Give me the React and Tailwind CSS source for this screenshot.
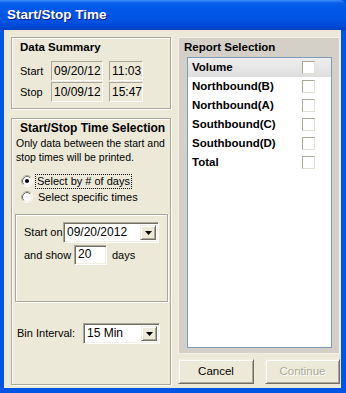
import React from 'react'

const font = "font-[family-name:'Liberation_Sans',Arial,sans-serif]"
const etched = 'border border-[#aca899] shadow-[1px_1px_0_#fff,inset_1px_1px_0_#fff]'
const sunken =
  'border border-t-[#aca899] border-l-[#aca899] border-b-white border-r-white shadow-[inset_1px_1px_0_#716f64,inset_-1px_-1px_0_#f1efe2]'
const raised =
  'border border-t-[#f1efe2] border-l-[#f1efe2] border-b-[#716f64] border-r-[#716f64] shadow-[inset_1px_1px_0_#fff,inset_-1px_-1px_0_#aca899]'

function Radio({ checked }) {
  return (
    <svg width="12" height="12" viewBox="0 0 12 12" className="shrink-0">
      <circle cx="6" cy="6" r="5.5" fill="none" stroke="#fff" />
      <path d="M2.11 9.89A5.5 5.5 0 0 1 9.89 2.11" fill="none" stroke="#aca899" />
      <circle cx="6" cy="6" r="4.5" fill="#fff" stroke="#f1efe2" />
      <path d="M2.82 9.18A4.5 4.5 0 0 1 9.18 2.82" fill="none" stroke="#716f64" />
      {checked && <circle cx="6" cy="6" r="2" fill="#000" />}
    </svg>
  )
}

function Combo({ value, className }) {
  return (
    <div className={`${sunken} bg-white flex items-stretch p-[2px] shrink-0 ${className}`}>
      <span className="flex-1 pl-[1px] text-[12px] leading-[15px] text-black whitespace-nowrap">{value}</span>
      <div className={`${raised} w-[16px] bg-[#ece9d8] flex items-center justify-center`}>
        <svg width="7" height="4" viewBox="0 0 7 4">
          <path d="M0 0h7L3.5 4z" fill="#000" />
        </svg>
      </div>
    </div>
  )
}

function StaticBox({ value, className }) {
  return (
    <div className={`h-[20px] shrink-0 border border-t-[#aca899] border-l-[#aca899] border-b-white border-r-white pl-[2px] text-[12px] leading-[18px] ${className}`}>
      {value}
    </div>
  )
}

const rows = ['Northbound(B)', 'Northbound(A)', 'Southbound(C)', 'Southbound(D)', 'Total']

function Check() {
  return <div className="w-[13px] h-[13px] shrink-0 bg-white border border-t-[#aca899] border-l-[#aca899] border-b-[#e2dfd4] border-r-[#e2dfd4]" />
}

export default function App() {
  return (
    <div className={`w-[346px] h-[393px] flex flex-col bg-[#0055e5] ${font} text-black whitespace-nowrap`}>
      {/* title bar */}
      <div className="h-[30px] shrink-0 flex items-center pl-[7px] rounded-tr-[6px] bg-[linear-gradient(to_bottom,#3d8df8_0px,#0b5fe9_3px,#0057e8_9px,#0054e3_20px,#0049d3_27px,#003fbd_30px)]">
        <span className="text-white font-bold text-[13.5px] [text-shadow:1px_1px_0_#0a1883]">Start/Stop Time</span>
      </div>

      {/* client */}
      <div className="flex-1 ml-[4px] mr-[5px] mb-[5px] bg-[#ece9d8] flex gap-[7px] pl-[7px] pt-[7px] pb-[3px]">
        {/* left column */}
        <div className="w-[160px] flex flex-col gap-[9px]">
          <div className={`${etched} h-[72px] flex flex-col pl-[8px]`}>
            <div className="mt-[2px] font-bold text-[11.5px] leading-[14px]">Data Summary</div>
            <div className="mt-[7px] flex flex-col gap-[1px] text-[11px]">
              <div className="flex items-center">
                <span className="w-[31px]">Start</span>
                <StaticBox value="09/20/12" className="w-[52px]" />
                <StaticBox value="11:03" className="w-[34px] ml-[6px]" />
              </div>
              <div className="flex items-center">
                <span className="w-[31px]">Stop</span>
                <StaticBox value="10/09/12" className="w-[52px]" />
                <StaticBox value="15:47" className="w-[34px] ml-[6px]" />
              </div>
            </div>
          </div>

          <div className={`${etched} flex-1 flex flex-col`}>
            <div className="mt-[2px] pl-[8px] font-bold text-[12px] leading-[14px]">Start/Stop Time Selection</div>
            <p className="mt-[1px] pl-[4px] text-[10.5px] leading-[14px]">
              Only data between the start and
              <br />
              stop times will be printed.
            </p>
            <div className="mt-[9px] ml-[9px] flex flex-col text-[11px]">
              <div className="h-[16px] flex items-center gap-[3px]">
                <Radio checked />
                <span className="px-[1px] leading-[13px] outline-1 outline-dotted outline-black">Select by # of days</span>
              </div>
              <div className="h-[16px] flex items-center gap-[3px]">
                <Radio />
                <span className="px-[2px] leading-[13px]">Select specific times</span>
              </div>
            </div>

            <div className={`${etched} mt-[9px] ml-[3px] w-[153px] h-[88px] pl-[8px] pt-[7px] flex flex-col gap-[2px] text-[11px]`}>
              <div className="flex items-center">
                <span className="w-[39px] shrink-0">Start on</span>
                <Combo value="09/20/2012" className="w-[96px] h-[21px]" />
              </div>
              <div className="flex items-center">
                <span className="w-[50px] shrink-0">and show</span>
                <div className={`${sunken} bg-white w-[33px] h-[20px] pl-[3px] text-[12px] leading-[17px] shrink-0`}>20</div>
                <span className="ml-[5px]">days</span>
              </div>
            </div>

            <div className="mt-[21px] pl-[5px] flex items-center text-[11px]">
              <span className="w-[66px] shrink-0">Bin Interval:</span>
              <Combo value="15 Min" className="w-[77px] h-[21px]" />
            </div>
          </div>
        </div>

        {/* right column */}
        <div className="w-[162px] flex flex-col">
          <div className="h-[317px] bg-[#d4d0c8] border border-[#f4f2ea] flex flex-col">
            <div className="mt-[2px] pl-[5px] font-bold text-[11.5px] leading-[14px]">Report Selection</div>
            <div className="mt-[3px] ml-[8px] w-[145px] flex-1 mb-[5px] bg-white border border-[#7f9db9] flex flex-col">
              <div className="h-[19px] flex items-center pl-[4px] pr-[16px] bg-[linear-gradient(to_bottom,#eeeeee,#dedede)]">
                <span className="flex-1 font-bold text-[11.5px]">Volume</span>
                <Check />
              </div>
              {rows.map(r => (
                <div key={r} className="h-[19px] flex items-center pl-[4px] pr-[16px]">
                  <span className="flex-1 font-bold text-[11.5px]">{r}</span>
                  <Check />
                </div>
              ))}
            </div>
          </div>

          <div className="mt-[5px] flex gap-[11px] text-[11.5px]">
            <button className={`${raised} w-[76px] h-[25px] bg-[#ece9d8]`}>Cancel</button>
            <button className={`${raised} w-[75px] h-[25px] bg-[#ece9d8] text-[#aca899] [text-shadow:1px_1px_0_#fff]`}>Continue</button>
          </div>
        </div>
      </div>
    </div>
  )
}
